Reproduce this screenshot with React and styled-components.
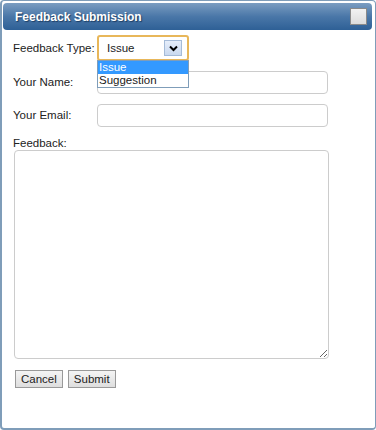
import React from "react";
import styled, { createGlobalStyle } from "styled-components";

const GlobalStyle = createGlobalStyle`
  html, body {
    margin: 0;
    padding: 0;
    background: #ffffff;
  }
  * {
    box-sizing: border-box;
  }
`;

const FIELDS = [
  { label: "Your Name:", id: "name" },
  { label: "Your Email:", id: "email" },
];

const OPTIONS = ["Issue", "Suggestion"];

const App = () => {
  return (
    <>
      <GlobalStyle />
      <Window>
        <TitleBar>
          <Title>Feedback Submission</Title>
          <CloseBox />
        </TitleBar>
        <Body>
          <Row>
            <Label>Feedback Type:</Label>
            <SelectWrap>
              <Select>
                <SelectValue>Issue</SelectValue>
                <SelectButton>
                  <svg width="9" height="7" viewBox="0 0 9 7">
                    <path d="M1 1.5 L4.5 5 L8 1.5" stroke="#000" strokeWidth="2" fill="none" />
                  </svg>
                </SelectButton>
              </Select>
              <OptionList>
                {OPTIONS.map((opt, i) => (
                  <Option key={opt} selected={i === 0}>
                    {opt}
                  </Option>
                ))}
              </OptionList>
            </SelectWrap>
          </Row>
          {FIELDS.map((f) => (
            <Row key={f.id}>
              <Label>{f.label}</Label>
              <Input />
            </Row>
          ))}
          <Label>Feedback:</Label>
          <TextArea />
          <Buttons>
            <Button>Cancel</Button>
            <Button>Submit</Button>
          </Buttons>
        </Body>
      </Window>
    </>
  );
};

export default App;

const Window = styled.div`
  width: 376px;
  height: 430px;
  border: 1px solid #7f9db9;
  border-left-width: 2px;
  border-bottom-width: 2px;
  border-radius: 4px;
  padding: 2px 3px 0 1px;
  font-family: "Liberation Sans", Tahoma, sans-serif;
  font-size: 11.5px;
  color: #222;
`;

const TitleBar = styled.div`
  height: 27px;
  display: flex;
  align-items: center;
  justify-content: space-between;
  padding: 0 5px 0 12px;
  border-radius: 4px;
  background: linear-gradient(to bottom, #7b9dc1 0%, #4a77a8 50%, #2e6096 100%);
`;

const Title = styled.span`
  font-family: "Liberation Sans", Tahoma, sans-serif;
  font-weight: bold;
  font-size: 12px;
  color: #ffffff;
  text-shadow: 1px 1px 1px #1c3d63;
`;

const CloseBox = styled.div`
  width: 17px;
  height: 17px;
  border: 1px solid #8a8a8a;
  background: linear-gradient(to bottom, #f2f2f2, #dcdcdc);
`;

const Body = styled.div`
  padding: 5px 0 0 10px;
  display: flex;
  flex-direction: column;
`;

const Row = styled.div`
  display: grid;
  grid-template-columns: 84px 231px;
  align-items: center;
  margin-bottom: 10px;
`;

const Label = styled.label`
  font-size: 11.5px;
  line-height: 13px;
  white-space: nowrap;
  color: #222;
`;

const SelectWrap = styled.div`
  position: relative;
  width: 92px;
`;

const Select = styled.div`
  height: 26px;
  border: 2px solid #e8b75a;
  border-radius: 3px;
  display: flex;
  align-items: center;
  justify-content: space-between;
  padding: 0 5px 0 8px;
  background: #fff;
`;

const SelectValue = styled.span`
  font-size: 11.5px;
  color: #222;
`;

const SelectButton = styled.div`
  width: 18px;
  height: 16px;
  border: 1px solid #a5bbd8;
  background: linear-gradient(to bottom, #e6eefa, #c9d9f0);
  display: flex;
  align-items: center;
  justify-content: center;
`;

const OptionList = styled.div`
  position: absolute;
  top: 25px;
  left: 0;
  width: 92px;
  border: 1px solid #7f9db9;
  background: #fff;
  z-index: 2;
`;

const Option = styled.div`
  height: 13px;
  line-height: 13px;
  padding-left: 1px;
  font-size: 11.5px;
  background: ${({ selected }) => (selected ? "#3399ff" : "#fff")};
  color: ${({ selected }) => (selected ? "#fff" : "#222")};
`;

const Input = styled.input`
  height: 23px;
  width: 231px;
  border: 1px solid #cccccc;
  border-radius: 4px;
  background: #fff;
`;

const TextArea = styled.textarea`
  margin: 0 0 0 1px;
  width: 315px;
  height: 209px;
  border: 1px solid #cccccc;
  border-radius: 4px;
  resize: both;
`;

const Buttons = styled.div`
  display: flex;
  gap: 5px;
  margin-top: 11px;
  padding-left: 2px;
`;

const Button = styled.button`
  height: 18px;
  padding: 0 5px;
  font-family: "Liberation Sans", Tahoma, sans-serif;
  font-size: 11.5px;
  color: #222;
  border: 1px solid #999;
  border-radius: 0;
  background: linear-gradient(to bottom, #f4f4f4, #dedede);
`;
